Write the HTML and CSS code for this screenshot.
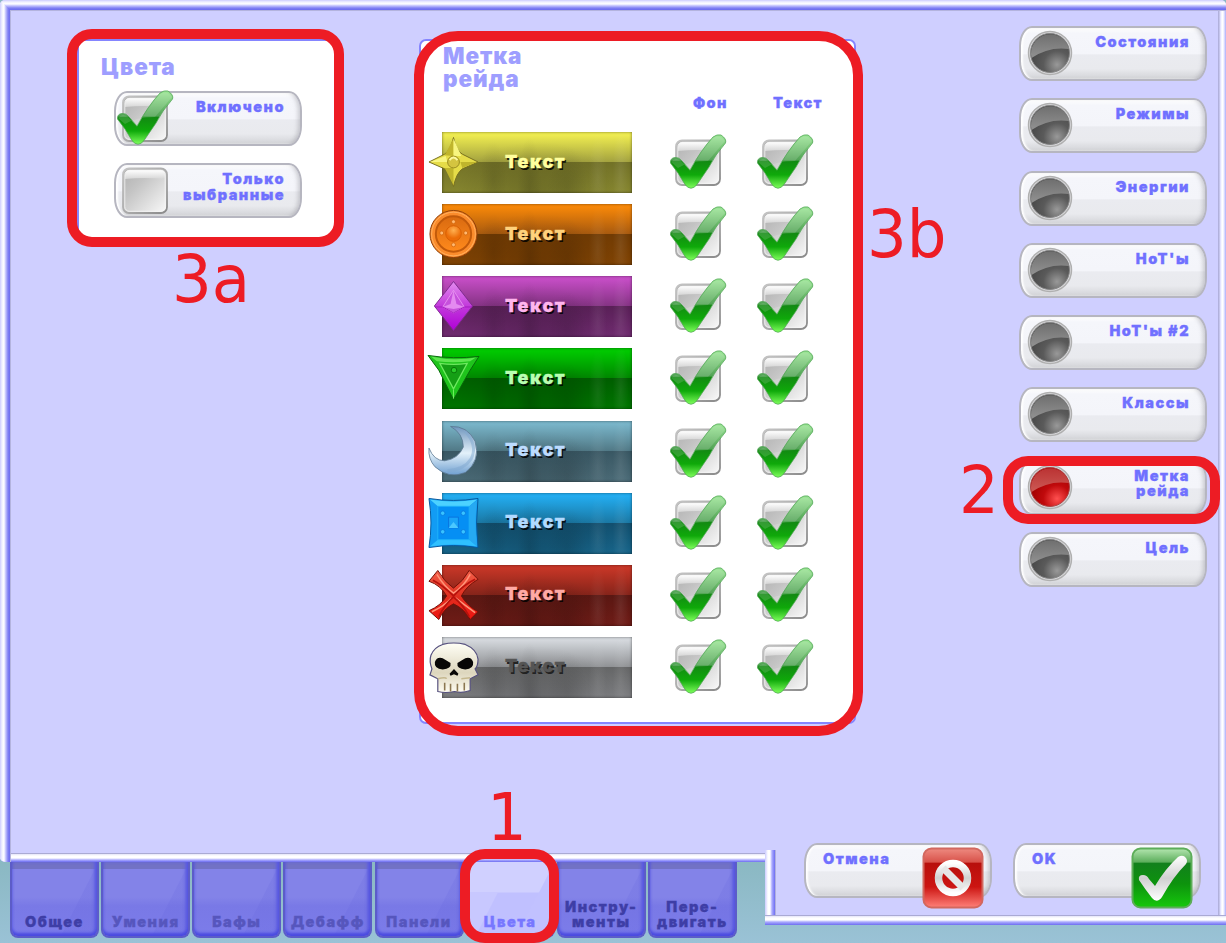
FILE: index.html
```html
<!DOCTYPE html>
<html lang="ru">
<head>
<meta charset="utf-8">
<title>Цвета</title>
<link rel="stylesheet" href="styles.css">
</head>
<body>
<svg class="defs" width="0" height="0">
  <defs>
    <linearGradient id="gBox" x1="0" y1="0" x2="1" y2="1"><stop offset="0" stop-color="#b0b0b0"/><stop offset=".35" stop-color="#c4c4c4"/><stop offset="1" stop-color="#fafafa"/></linearGradient>
    <linearGradient id="gBoxEdge" x1="0" y1="0" x2="1" y2="1"><stop offset="0" stop-color="#c4c4c4"/><stop offset=".5" stop-color="#acacac"/><stop offset="1" stop-color="#8a8a8a"/></linearGradient>
    <linearGradient id="gBoxTop" x1="0" y1="0" x2="0" y2="1"><stop offset="0" stop-color="#fff"/><stop offset="1" stop-color="#d6d6d6"/></linearGradient>
    <linearGradient id="gTick" x1="0" y1="0" x2="0" y2="1"><stop offset="0" stop-color="#9ce696"/><stop offset=".47" stop-color="#52a355"/><stop offset=".5" stop-color="#128a12"/><stop offset=".75" stop-color="#0fa90a"/><stop offset="1" stop-color="#7fff5c"/></linearGradient>
    <radialGradient id="gDark" cx=".68" cy=".8" r=".7"><stop offset="0" stop-color="#999"/><stop offset=".5" stop-color="#5a5a5a"/><stop offset="1" stop-color="#484848"/></radialGradient>
    <linearGradient id="gDarkTop" x1="0" y1="0" x2="0" y2="1"><stop offset="0" stop-color="#6f6f6f"/><stop offset="1" stop-color="#929292"/></linearGradient>
    <radialGradient id="gRed" cx=".68" cy=".8" r=".7"><stop offset="0" stop-color="#ff5050"/><stop offset=".5" stop-color="#c00a0c"/><stop offset="1" stop-color="#a00000"/></radialGradient>
    <linearGradient id="gRedTop" x1="0" y1="0" x2="0" y2="1"><stop offset="0" stop-color="#b33"/><stop offset="1" stop-color="#cc5a55"/></linearGradient>
    <linearGradient id="gStop" x1="0" y1="0" x2="0" y2="1"><stop offset="0" stop-color="#ee8a80"/><stop offset=".23" stop-color="#d8524a"/><stop offset=".25" stop-color="#b80f0c"/><stop offset=".65" stop-color="#cc1512"/><stop offset="1" stop-color="#ff8078"/></linearGradient>
    <linearGradient id="gOk" x1="0" y1="0" x2="0" y2="1"><stop offset="0" stop-color="#b4e6b0"/><stop offset=".23" stop-color="#5cae5c"/><stop offset=".25" stop-color="#12801c"/><stop offset=".6" stop-color="#0d930d"/><stop offset="1" stop-color="#16c80c"/></linearGradient>
    <linearGradient id="gSilver" x1="0" y1="0" x2="0" y2="1"><stop offset="0" stop-color="#fff"/><stop offset=".5" stop-color="#d0d0d0"/><stop offset="1" stop-color="#fff"/></linearGradient>
    <radialGradient id="gCoin" cx=".5" cy=".3"><stop offset="0" stop-color="#ffb050"/><stop offset="1" stop-color="#ec6d08"/></radialGradient>
    <linearGradient id="gPlate" x1="0" y1="0" x2="0" y2="1"><stop offset="0" stop-color="#d96a10"/><stop offset="1" stop-color="#ff8a1c"/></linearGradient>
    <linearGradient id="gMoon" x1="0" y1="0" x2="0" y2="1"><stop offset="0" stop-color="#6f95bd"/><stop offset=".55" stop-color="#e3f1fa"/><stop offset="1" stop-color="#6f9fd0"/></linearGradient>
    <linearGradient id="gBone" x1="0" y1="0" x2="0" y2="1"><stop offset="0" stop-color="#fffff6"/><stop offset=".6" stop-color="#ddd6bd"/><stop offset="1" stop-color="#fffdf2"/></linearGradient>
    <linearGradient id="gGem" x1="0" y1="0" x2="0" y2="1"><stop offset="0" stop-color="#e48cf0"/><stop offset=".5" stop-color="#c23adb"/><stop offset="1" stop-color="#b000d6"/></linearGradient>
    <linearGradient id="gCross" x1="0" y1="0" x2="0" y2="1"><stop offset="0" stop-color="#f4604a"/><stop offset=".5" stop-color="#e03020"/><stop offset="1" stop-color="#ee1410"/></linearGradient>

    <symbol id="box" viewBox="0 0 60 60">
      <rect x="7" y="7.500" width="44" height="44.500" rx="6" fill="url(#gBox)" stroke="url(#gBoxEdge)" stroke-width="1.800"/>
      <path d="M9 18V14q0-5 5-5h30q5 0 5 5v4q-20-2-40 0z" fill="url(#gBoxTop)"/>
      <rect x="8.800" y="9.300" width="40.400" height="41" rx="4.500" fill="none" stroke="#f6f6f6" stroke-opacity=".8"/>
    </symbol>
    <symbol id="tick" viewBox="0 0 60 60">
      <path d="M1.500 30Q1 25 6 24.500Q10 24 13 28L21 37Q32 17 44 4Q48 1 52 2Q58 6 56.500 10Q46 22 40 34L28 51.500Q22 59 16 51.500L9 40Z" fill="url(#gTick)" stroke="#4fa553" stroke-opacity=".75"/>
      <path d="M2 29Q6 24 12 28L21 38Q31 19 44 5Q51 1 56 8L39 28Q20 28 9 35Z" fill="#fff" opacity=".14"/>
    </symbol>
    <symbol id="checked" viewBox="0 0 60 60"><use href="#box"/><use href="#tick"/></symbol>
    <symbol id="lamp" viewBox="0 0 46 46">
      <circle cx="23" cy="23" r="21.500" fill="#dcdcdf" stroke="#b0b0b0" stroke-width="1.500"/>
      <circle cx="23" cy="23" r="19.500" fill="url(#gDark)" stroke="#858585"/>
      <path d="M4.500 28A19 19 0 1 1 42 19Q22 16 4.500 28Z" fill="url(#gDarkTop)"/>
    </symbol>
    <symbol id="lampRed" viewBox="0 0 46 46">
      <circle cx="23" cy="23" r="21.500" fill="#dcdcdf" stroke="#b0b0b0" stroke-width="1.500"/>
      <circle cx="23" cy="23" r="19.500" fill="url(#gRed)" stroke="#a44"/>
      <path d="M4.500 28A19 19 0 1 1 42 19Q22 16 4.500 28Z" fill="url(#gRedTop)"/>
    </symbol>
  </defs>
</svg>

<div class="app">
  <main class="window">
    <div class="frame frame-top"></div>
    <div class="frame frame-left"></div>
    <div class="content">
      <section class="card colors">
        <h2>Цвета</h2>
        <div class="pill option"><svg class="check"><use href="#checked"/></svg><span>Включено</span></div>
        <div class="pill option"><svg class="check"><use href="#box"/></svg><span>Только<br>выбранные</span></div>
      </section>

      <section class="card marks">
        <h2>Метка<br>рейда</h2>
        <div class="heads"><span>Фон</span><span>Текст</span></div>
        <div class="rows">
          <div class="row"><div class="bar yellow"><svg class="mark" viewBox="0 0 52 52"><path d="M26 1Q29 15 35 18L51 26L35 33Q29 37 26 51Q22 36 17 33L1 26L17 18Q23 14 26 1Z" fill="#e6dc48" stroke="#777020"/><path d="M26 2V20L17 19ZM50 26H33L35 32ZM26 50V32L17 32Z" fill="#c0b52c"/><path d="M26 2V20L34 20ZM2 26H20L18 20Z" fill="#f8f580"/><circle cx="26" cy="26" r="6" fill="#d4c440" stroke="#998b20"/><path d="M22 24Q26 19 30 24" stroke="#fbf8a0" stroke-width="2" fill="none"/></svg><b>Текст</b></div><svg class="check"><use href="#checked"/></svg><svg class="check"><use href="#checked"/></svg></div>
          <div class="row"><div class="bar orange"><svg class="mark" viewBox="0 0 52 52"><circle cx="26" cy="26" r="24" fill="#fb8c2c" stroke="#8c3d08"/><circle cx="26" cy="26" r="22.300" fill="none" stroke="#ffb060"/><circle cx="26" cy="26" r="18" fill="url(#gPlate)" stroke="#c25a0a" stroke-width="2"/><circle cx="26" cy="25.500" r="8" fill="url(#gCoin)" stroke="#d86004"/><g fill="#ffb870" stroke="#cf5f04" stroke-width=".7"><circle cx="26" cy="13.500" r="2"/><circle cx="26" cy="37" r="2"/><circle cx="14" cy="25" r="2"/><circle cx="38.500" cy="25" r="2"/></g></svg><b>Текст</b></div><svg class="check"><use href="#checked"/></svg><svg class="check"><use href="#checked"/></svg></div>
          <div class="row"><div class="bar purple"><svg class="mark" viewBox="0 0 52 52"><path d="M26 1L45.500 26L26 51L6.500 26Z" fill="url(#gGem)" stroke="#7e2a90"/><path d="M26 10L37 27L26 33L15 27Z" fill="#c650dc" stroke="#ec9df4" stroke-width=".8"/><path d="M26 10L29 24L37 27L26 29L15 27L23 24Z" fill="#e48af0"/><path d="M7 27H15L26 33L37 27H45" fill="none" stroke="#a41cc0"/></svg><b>Текст</b></div><svg class="check"><use href="#checked"/></svg><svg class="check"><use href="#checked"/></svg></div>
          <div class="row"><div class="bar green"><svg class="mark" viewBox="0 0 52 52"><path d="M0 3Q26 7 52 4L43 18L26 48L11 18Z" fill="#1fc41c" stroke="#08670a"/><path d="M3 4Q26 9 49 5L43 9Q26 11 9 9Z" fill="#5fe650"/><path d="M12 11Q26 13 40 11L26 37Z" fill="#159f15" stroke="#6eea60" stroke-width="1.300"/><path d="M26 38V47" stroke="#70ef60"/><circle cx="26.500" cy="18" r="2.800" fill="#2acb2a" stroke="#087308"/></svg><b>Текст</b></div><svg class="check"><use href="#checked"/></svg><svg class="check"><use href="#checked"/></svg></div>
          <div class="row"><div class="bar slate"><svg class="mark" viewBox="0 0 52 52"><path d="M23 1Q40 0 48 16Q54 36 38 48Q21 55 7 42Q0 34 1 23Q6 36 17 36Q31 34 36 22Q36 8 23 1Z" fill="url(#gMoon)" stroke="#5a7690" stroke-width=".8"/><path d="M38 6Q51 20 44 34Q37 45 20 46" fill="none" stroke="#7fa8d0" stroke-width="3" opacity=".5"/></svg><b>Текст</b></div><svg class="check"><use href="#checked"/></svg><svg class="check"><use href="#checked"/></svg></div>
          <div class="row"><div class="bar blue"><svg class="mark" viewBox="0 0 52 52"><path d="M1 1Q26 5 51 1Q48 26 51 51Q26 47 1 51Q5 26 1 1Z" fill="#129cf4" stroke="#07589c"/><path d="M2 2Q26 6 50 2L42 9H10Z" fill="#4cd2ff"/><path d="M50 3L42 9V43L50 50Q47 26 50 3Z" fill="#26a9f2"/><path d="M10 43H42L50 50Q26 46 2 50Z" fill="#2fc0ff"/><path d="M10 9H42V43H10Z" fill="#058ff4" stroke="#1fb2fa"/><path d="M21 20H31V31H21Z" fill="#1ba4f8" stroke="#0873df"/><path d="M21 31L26 25L31 31Z" fill="#4cc8ff"/><g fill="#37c3ff" stroke="#0876dc" stroke-width=".8"><circle cx="15" cy="16" r="2.300"/><circle cx="36" cy="16" r="2.300"/><circle cx="15" cy="35" r="2.300"/><circle cx="36" cy="35" r="2.300"/></g></svg><b>Текст</b></div><svg class="check"><use href="#checked"/></svg><svg class="check"><use href="#checked"/></svg></div>
          <div class="row"><div class="bar red"><svg class="mark" viewBox="0 0 52 52"><path d="M10 1Q17 13 26 19Q36 12 42 1L51 10Q39 17 34 27Q40 37 51 43L43 51Q37 40 26 35Q16 40 11 51L1 42Q13 37 19 27Q13 16 1 12Z" fill="url(#gCross)" stroke="#741006"/><path d="M9 5Q17 18 26 24Q37 17 43 5M4 43Q17 37 24 29M28 29Q37 36 48 44" fill="none" stroke="#ff9478" stroke-width="1.600"/><path d="M5 11Q15 16 26 27Q36 16 48 10M11 48Q17 36 26 28Q36 36 42 48" fill="none" stroke="#b8120c" stroke-width="1.800"/></svg><b>Текст</b></div><svg class="check"><use href="#checked"/></svg><svg class="check"><use href="#checked"/></svg></div>
          <div class="row"><div class="bar gray"><svg class="mark" viewBox="0 0 52 52"><path d="M15 3Q26 0 38 3Q50 8 51 18Q51 25 48 28L51 34L43 38V50Q35 53 27 51Q18 53 10 51V38L2 34L4 28Q1 20 3 14Q6 6 15 3Z" fill="url(#gBone)" stroke="#55507e" stroke-width="1.200"/><path d="M7 21Q9 15 15 17L23 22Q24 28 15 28.500Q6 28 7 21ZM46 21Q44 15 38 17L30 22Q29 28 38 28.500Q47 28 46 21ZM26.500 28L31 33L30 35L26.500 33.500L23 35L22 33Z" fill="#080706"/><path d="M17 42V50M23 43V51M30 43V51M37 42V50" stroke="#8b7750" stroke-width="1.600"/><path d="M10 38Q18 36 19 38M34 38L43 37" fill="none" stroke="#c5b88f" stroke-width="1.500"/></svg><b>Текст</b></div><svg class="check"><use href="#checked"/></svg><svg class="check"><use href="#checked"/></svg></div>
        </div>
      </section>

      <nav class="categories">
        <div class="pill"><svg class="lamp"><use href="#lamp"/></svg><span>Состояния</span></div>
        <div class="pill"><svg class="lamp"><use href="#lamp"/></svg><span>Режимы</span></div>
        <div class="pill"><svg class="lamp"><use href="#lamp"/></svg><span>Энергии</span></div>
        <div class="pill"><svg class="lamp"><use href="#lamp"/></svg><span>НоТ'ы</span></div>
        <div class="pill"><svg class="lamp"><use href="#lamp"/></svg><span>НоТ'ы #2</span></div>
        <div class="pill"><svg class="lamp"><use href="#lamp"/></svg><span>Классы</span></div>
        <div class="pill"><svg class="lamp"><use href="#lampRed"/></svg><span>Метка<br>рейда</span></div>
        <div class="pill"><svg class="lamp"><use href="#lamp"/></svg><span>Цель</span></div>
      </nav>
    </div>
    <div class="frame frame-right"></div>
    <div class="frame frame-bottom"></div>
  </main>

  <footer class="footer">
    <div class="tabs">
      <div class="tab strong"><span>Общее</span></div>
      <div class="tab"><span>Умения</span></div>
      <div class="tab"><span>Бафы</span></div>
      <div class="tab"><span>Дебафф</span></div>
      <div class="tab"><span>Панели</span></div>
      <div class="tab active"><span>Цвета</span></div>
      <div class="tab strong"><span>Инстру-<br>менты</span></div>
      <div class="tab strong"><span>Пере-<br>двигать</span></div>
    </div>
    <div class="actions">
      <div class="pill action"><span>Отмена</span>
        <svg class="badge" viewBox="0 0 62 62"><rect x="1.500" y="1.500" width="59" height="59" rx="8" fill="url(#gStop)" stroke="#d2685f" stroke-width="2"/><circle cx="31" cy="31" r="14.500" fill="none" stroke="url(#gSilver)" stroke-width="7.500"/><path d="M21 21L41 41" stroke="#e6e6e6" stroke-width="7"/></svg>
      </div>
      <div class="pill action"><span>OK</span>
        <svg class="badge" viewBox="0 0 62 62"><rect x="1.500" y="1.500" width="59" height="59" rx="8" fill="url(#gOk)" stroke="#5dad59" stroke-width="2"/><path d="M8 33Q7 28 12 28Q16 28 18 32L24 39Q34 22 47 10Q52 7 55 11Q57 14 55 17Q42 30 31 50Q26 57 21 51Q14 42 8 33Z" fill="url(#gSilver)"/></svg>
      </div>
    </div>
  </footer>

  <div class="ring ring-1"></div><div class="num num-1">1</div>
  <div class="ring ring-2"></div><div class="num num-2">2</div>
  <div class="ring ring-3a"></div><div class="num num-3a">3a</div>
  <div class="ring ring-3b"></div><div class="num num-3b">3b</div>
</div>
</body>
</html>
```
FILE: styles.css
```css
* { box-sizing: border-box; }
body { margin: 0; font-family: Inter, "Liberation Sans", sans-serif; font-weight: 900; }
.defs { display: block; position: absolute; }
.app { position: relative; width: 1226px; height: 943px; overflow: hidden; background: linear-gradient(#8ab8c2 860px, #9ac2d6 943px); }

.window { display: grid; grid-template: 11px 842px 9px / 11px 1207px 8px; height: 862px; background: #cfcfff; border-radius: 5px; overflow: hidden; }
.frame-top { grid-area: 1 / 1 / 2 / 4; background: linear-gradient(#ccccff 0, #f0f0ff 2px, #fff 4px, #d8d8ff 5px, #8080f4 8px, #6b6bee 10px, #b4b4de 10px); }
.frame-left { grid-area: 1 / 1 / 4 / 2; clip-path: polygon(0 0, 100% 11px, 100% 100%, 0 100%); background: linear-gradient(90deg, #ccccff 0, #f0f0ff 2px, #fff 4px, #d8d8ff 5px, #8080f4 8px, #6b6bee 10px, #b4b4de 10px); }
.content { grid-area: 2 / 2; display: grid; grid-template-columns: 408px 600px 199px; align-items: start; }
.frame-right { grid-area: 2 / 3 / 4 / 4; background: linear-gradient(90deg, #b1b1dc 0, #b1b1dc 1px, #dadaff 2px, #fff 4px, #fff 5px, #ccccff 7px, #a9a9f5 8px); }
.frame-bottom { grid-area: 3 / 1 / 4 / 4; background: linear-gradient(#aaaad4 1px, #e4e4f8 1px, #fff 3px, #fff 5px, #aaaaff 7px, #6d6df0 9px); }

.card { background: #fff; border: 2px solid #8585ff; border-radius: 7px; }
.card h2 { margin: 0; color: #9e9eff; font-size: 22.500px; font-weight: 900; line-height: 23px; letter-spacing: .9px; }
.colors { margin: 28px 0 0 66px; width: 262px; height: 202px; display: flex; flex-direction: column; padding: 14px 0 0 22px; }
.colors h2 { height: 36px; }
.option { margin: 0 0 17px 13px; }

.marks { margin: 28px 0 0; width: 437px; height: 685px; padding: 3px 0 0 22px; }
.marks h2 { height: 50px; }
.heads { display: grid; grid-template-columns: 80px 60px; margin-left: 250px; height: 38px; color: #7070ff; font-size: 14.500px; line-height: 18px; letter-spacing: 1.400px; -webkit-text-stroke: .3px; }
.rows { display: grid; grid-auto-rows: 72.150px; }
.row { display: grid; grid-template-columns: 226px 87px 60px; align-items: start; }
.row .check { margin-top: 1px; }
.bar { position: relative; margin-left: -1px; width: 190px; height: 61px; display: flex; align-items: center; padding: 0 0 2px 63px; color: var(--ink); font-size: 18px; letter-spacing: 1.600px; text-shadow: 1.500px 1.500px 0 rgba(0,0,0,.85); box-shadow: inset 0 0 3px rgba(0,0,0,.55);
  background: radial-gradient(ellipse 14px 40px at 27% 80%, rgba(0,0,0,.09), transparent), radial-gradient(ellipse 12px 50px at 46% 90%, rgba(0,0,0,.1), transparent), radial-gradient(ellipse 20px 40px at 66% 90%, rgba(0,0,0,.09), transparent), radial-gradient(ellipse 9px 45px at 82% 75%, rgba(255,255,255,.07), transparent), radial-gradient(ellipse 8px 50px at 94% 70%, rgba(255,255,255,.08), transparent), radial-gradient(ellipse at 50% 100%, rgba(0,0,0,.16), transparent 60%), linear-gradient(var(--top), var(--mid) 49%, var(--low) 50%, var(--end)); }
.bar b { font-weight: 900; line-height: 20px; -webkit-text-stroke: .3px; }
.mark { position: absolute; left: -14px; top: 4px; width: 51px; height: 52px; overflow: visible; }
.yellow { --top: #f7f452; --mid: #a3a23f; --low: #727127; --end: #86862f; --ink: #ffff9e; }
.orange { --top: #ff8c08; --mid: #a85a0f; --low: #713b03; --end: #804303; --ink: #ffd27c; }
.purple { --top: #cc50cc; --mid: #853384; --low: #592057; --end: #702b70; --ink: #ffb5ee; }
.green { --top: #00d000; --mid: #008700; --low: #005d00; --end: #007600; --ink: #b8ffb0; }
.slate { --top: #7dbbd0; --mid: #517986; --low: #395763; --end: #4c6c78; --ink: #bddcff; }
.blue { --top: #24b2f8; --mid: #1a78a4; --low: #124f6e; --end: #17658a; --ink: #b1daff; }
.red { --top: #cd3828; --mid: #86241a; --low: #5a1712; --end: #701c17; --ink: #ffaaa5; }
.gray { --top: #dce0e5; --mid: #909295; --low: #656667; --end: #7c7d80; --ink: #555; text-shadow: 1.500px 1.500px 0 #222; }

.check { display: block; width: 60px; height: 60px; }
.pill { position: relative; width: 188px; height: 55px; border: 2px solid #b6b6c0; border-radius: 13px / 20px; padding: 6px 15px 0 0; color: #7070ff; font-size: 14.500px; line-height: 15.500px; letter-spacing: 1.500px; text-align: right; -webkit-text-stroke: .3px;
  background: linear-gradient(#fff, #f5f6fb 10%, #f4f5fa 50%, #eaebf0 53%, #e9eaee 80%, #d2d3d7); box-shadow: inset -4px 0 4px -2px rgba(120,120,130,.35), inset 2px 0 2px #fff; }
.pill .check { position: absolute; left: 0; top: -4px; }
.lamp { position: absolute; left: 6px; top: 2px; width: 46px; height: 46px; }
.categories { display: grid; grid-auto-rows: 72.250px; padding-top: 15px; }

.footer { display: grid; grid-template-columns: 765px 461px; align-items: start; }
.tabs { display: grid; grid-template-columns: repeat(8, 89px); column-gap: 2.140px; padding-left: 10px; }
.tab { height: 76px; border: 2px solid #5c5cc8; border-top: 0; border-radius: 0 0 8px 8px; display: flex; align-items: flex-end; justify-content: center; padding-bottom: 7px; color: #5656bd; font-size: 14.500px; line-height: 15px; letter-spacing: 1.500px; text-align: center; white-space: nowrap; -webkit-text-stroke: .3px;
  background: linear-gradient(#7272c5 7px, transparent 7px), linear-gradient(117deg, transparent 70%, rgba(100,100,220,.18) 71%), linear-gradient(#8383e8 35px, #7979e6 44px, #7c7cea); box-shadow: inset 0 -3px 3px #4a4ae0, inset -3px 0 3px #6060e0; }
.tab.strong { color: #3e3ea6; }
.tab.active { color: #7777ff; background: linear-gradient(117deg, #c8c8ff 24%, transparent 25%) 0 30px no-repeat, linear-gradient(117deg, transparent 70%, #c1c1ff 71%), linear-gradient(#d0d0ff 30px, #c0c0ff 31px); box-shadow: none; }
.actions { margin-top: -12px; height: 75px; display: flex; gap: 21px; padding: 0 0 0 39px;
  background: linear-gradient(90deg, #ccccff, #fff 3px, #fff 5px, #aaaaff 7px, #6e6ef2 10px, #b0b0dc 10px, #b0b0dc 11px, transparent 11px) 0 0 / 11px 65px no-repeat, linear-gradient(#aaaad4 1px, #e4e4f8 1px, #fff 3px, #fff 5px, #aaaaff 7px, #6d6df0 10px) 0 65px / 461px 10px no-repeat, linear-gradient(90deg, #b1b1dc 1px, #dadaff 2px, #fff 4px, #fff 5px, #ccccff 7px, #a9a9f5 8px) 453px 0 / 8px 65px no-repeat, #cfcfff; }
.action { margin-top: -7px; text-align: left; padding: 6px 0 0 17px; }
.action .badge { position: absolute; left: 116px; top: 2px; width: 62px; height: 62px; }

.ring { position: absolute; border: 10px solid #ed1c24; }
.ring-1 { left: 460px; top: 849px; width: 99px; height: 94px; border-radius: 25px; }
.ring-2 { left: 1003px; top: 456px; width: 217px; height: 68px; border-radius: 25px; }
.ring-3a { left: 67px; top: 29px; width: 277px; height: 218px; border-radius: 25px; }
.ring-3b { left: 414px; top: 31px; width: 449px; height: 705px; border-radius: 44px; }
.num { position: absolute; color: #ed1c24; font: 400 65px/66px "DejaVu Sans Condensed", "DejaVu Sans", sans-serif; font-stretch: condensed; transform: scaleX(1.07); transform-origin: 0 0; }
.num-1 { left: 487px; top: 785px; }
.num-2 { left: 959px; top: 458px; }
.num-3a { left: 172px; top: 247px; }
.num-3b { left: 867px; top: 202px; }
```
